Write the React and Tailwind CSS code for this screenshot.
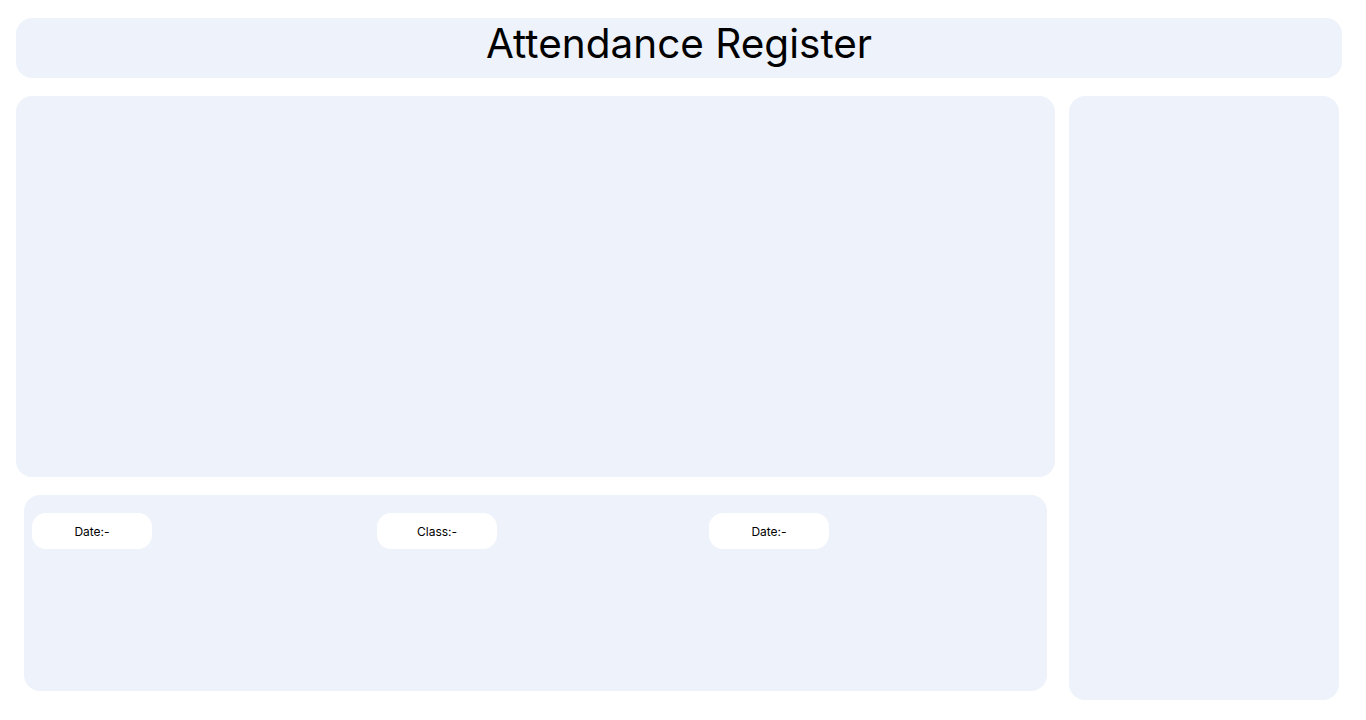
export default function App() {
  return (
    <div className="min-h-screen bg-white font-['Inter',sans-serif] text-black">
      <div className="px-4 pt-[18px]">
        {/* Title bar */}
        <header className="flex h-[60px] w-[1326px] items-center justify-center rounded-2xl bg-[#eef2fa]">
          <h1 className="-mt-2 text-[40.5px] leading-none">Attendance Register</h1>
        </header>

        <div className="mt-[18px] flex gap-[14px]">
          {/* Left column */}
          <div className="w-[1039px]">
            <section className="h-[381px] rounded-2xl bg-[#eef2fa]" />

            <section className="mx-2 mt-[18px] h-[196px] rounded-2xl bg-[#eef2fa] px-2 pt-[18px]">
              <div className="flex">
                <div className="flex h-9 w-[120px] items-center justify-center rounded-[14px] bg-white pt-0.5 text-[12px]">Date:-</div>
                <div className="ml-[225px] flex h-9 w-[120px] items-center justify-center rounded-[14px] bg-white pt-0.5 text-[12px]">Class:-</div>
                <div className="ml-[212px] flex h-9 w-[120px] items-center justify-center rounded-[14px] bg-white pt-0.5 text-[12px]">Date:-</div>
              </div>
            </section>
          </div>

          {/* Right column */}
          <aside className="h-[604px] w-[270px] rounded-2xl bg-[#eef2fa]" />
        </div>
      </div>
    </div>
  );
}
